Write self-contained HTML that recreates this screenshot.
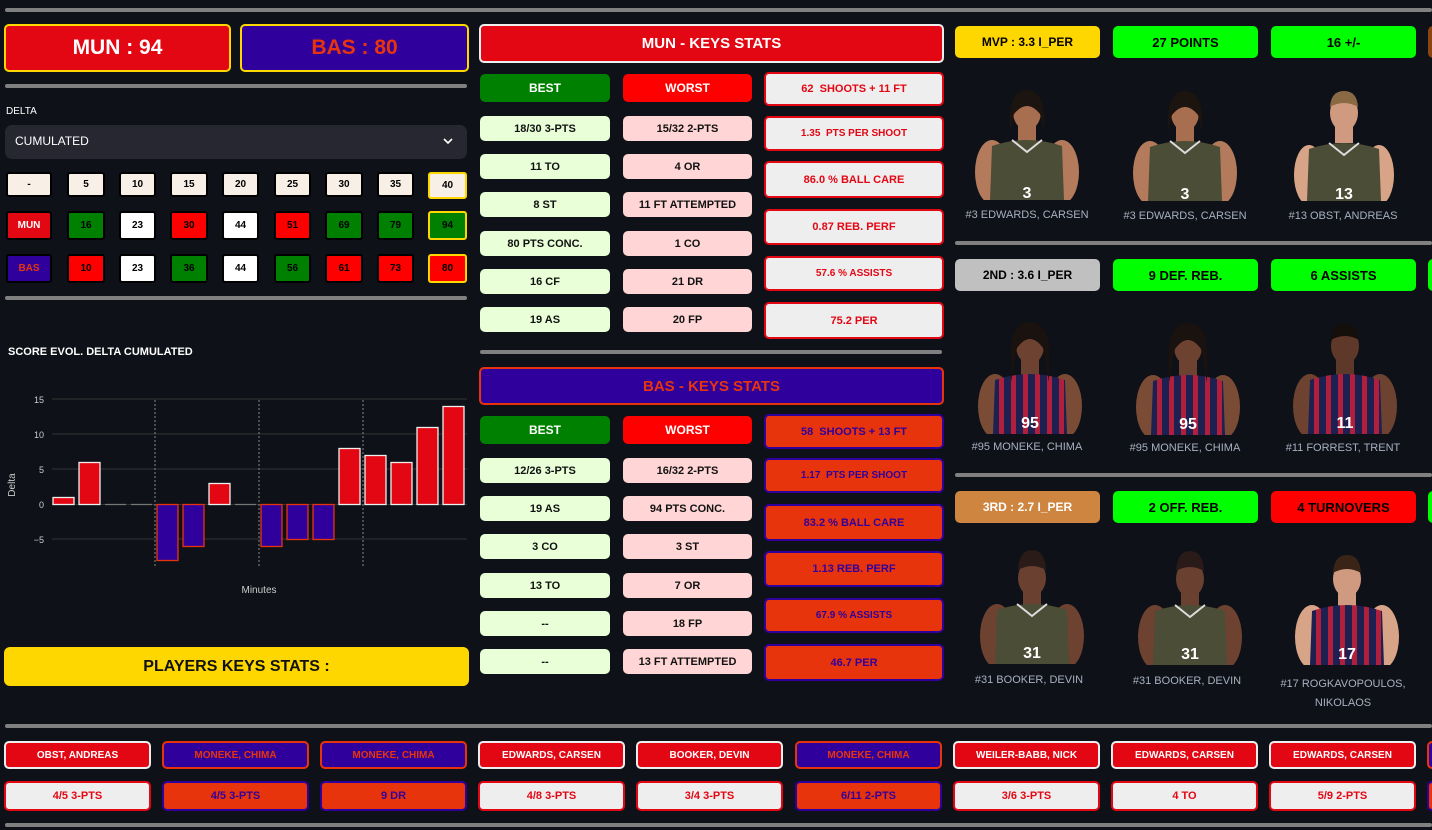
<!DOCTYPE html>
<html><head><meta charset="utf-8"><style>
*{box-sizing:border-box;margin:0;padding:0}
body{width:1432px;height:830px;background:#0e1117;overflow:hidden;position:relative;font-family:"Liberation Sans",sans-serif;font-weight:bold;color:#fff}
.b{position:absolute;display:flex;align-items:center;justify-content:center;text-align:center;border-radius:5px;white-space:nowrap}
.sep{position:absolute;height:4px;background:#808080;border-radius:2px}
.t{position:absolute;white-space:nowrap}
.g{background:#e8ffd8;color:#111;font-size:11px}
.r{background:#ffd5d5;color:#111;font-size:11px}
.mr{background:#eee;border:2px solid #e30613;color:#e30613;font-size:11px}
.br{background:#e8340c;border:2px solid #30009c;color:#30009c;font-size:11px}
.gb{border:2px solid #000;font-size:10px;color:#000;border-radius:3px}
.nm{position:absolute;color:#a8b0c0;font-weight:normal;font-size:11px;text-align:center;width:150px}
.rb{font-size:13px;color:#000;height:32px;width:145px}
.bn{font-size:10px;height:28px;width:147px}
.bs{font-size:11px;height:30px;width:147px}
.pm1{background:#e30613;border:2px solid #eee;color:#fff}
.pb1{background:#30009c;border:2px solid #e8340c;color:#e8340c}
.pm2{background:#eee;border:2px solid #e30613;color:#e30613}
.pb2{background:#e8340c;border:2px solid #30009c;color:#30009c}
svg text{font-weight:normal}
</style></head><body>
<svg width="0" height="0" style="position:absolute"><defs>
<pattern id="st" width="12" height="10" patternUnits="userSpaceOnUse"><rect width="12" height="10" fill="#1d2050"/><rect width="5" height="10" fill="#b0203c"/></pattern>
</defs></svg>

<div class="sep" style="left:5px;top:8px;width:1427px"></div>

<!-- LEFT -->
<div class="b" style="left:4px;top:24px;width:227px;height:48px;background:#e30613;border:2px solid #ffd700;font-size:21px">MUN : 94</div>
<div class="b" style="left:240px;top:24px;width:229px;height:48px;background:#30009c;border:2px solid #ffd700;font-size:21px;color:#e8340c">BAS : 80</div>
<div class="sep" style="left:5px;top:84px;width:462px"></div>
<div class="t" style="left:6px;top:106px;font-size:10px;font-weight:normal">DELTA</div>
<div style="position:absolute;left:5px;top:125px;width:462px;height:34px;background:#262730;border-radius:7px"></div>
<div class="t" style="left:15px;top:134px;font-size:12px;font-weight:normal">CUMULATED</div>
<svg style="position:absolute;left:443px;top:137px" width="10" height="8"><path d="M1 2 L5 6 L9 2" stroke="#fff" stroke-width="1.6" fill="none"/></svg>

<div class="b gb" style="left:6px;top:172px;width:46px;height:25px;background:#f8f0e6">-</div>
<div class="b gb" style="left:67px;top:172px;width:38px;height:25px;background:#f8f0e6">5</div>
<div class="b gb" style="left:119px;top:172px;width:37px;height:25px;background:#f8f0e6">10</div>
<div class="b gb" style="left:170px;top:172px;width:38px;height:25px;background:#f8f0e6">15</div>
<div class="b gb" style="left:222px;top:172px;width:37px;height:25px;background:#f8f0e6">20</div>
<div class="b gb" style="left:274px;top:172px;width:37px;height:25px;background:#f8f0e6">25</div>
<div class="b gb" style="left:325px;top:172px;width:38px;height:25px;background:#f8f0e6">30</div>
<div class="b gb" style="left:377px;top:172px;width:37px;height:25px;background:#f8f0e6">35</div>
<div class="b gb" style="left:428px;top:172px;width:39px;height:27px;background:#f8f0e6;border-color:#ffd700">40</div>

<div class="b gb" style="left:6px;top:211px;width:46px;height:29px;background:#e30613;color:#fff">MUN</div>
<div class="b gb" style="left:67px;top:211px;width:38px;height:29px;background:#008000">16</div>
<div class="b gb" style="left:119px;top:211px;width:37px;height:29px;background:#fff">23</div>
<div class="b gb" style="left:170px;top:211px;width:38px;height:29px;background:#ff0000">30</div>
<div class="b gb" style="left:222px;top:211px;width:37px;height:29px;background:#fff">44</div>
<div class="b gb" style="left:274px;top:211px;width:37px;height:29px;background:#ff0000">51</div>
<div class="b gb" style="left:325px;top:211px;width:38px;height:29px;background:#008000">69</div>
<div class="b gb" style="left:377px;top:211px;width:37px;height:29px;background:#008000">79</div>
<div class="b gb" style="left:428px;top:211px;width:39px;height:29px;background:#008000;border-color:#ffd700">94</div>

<div class="b gb" style="left:6px;top:254px;width:46px;height:29px;background:#30009c;color:#e8340c">BAS</div>
<div class="b gb" style="left:67px;top:254px;width:38px;height:29px;background:#ff0000">10</div>
<div class="b gb" style="left:119px;top:254px;width:37px;height:29px;background:#fff">23</div>
<div class="b gb" style="left:170px;top:254px;width:38px;height:29px;background:#008000">36</div>
<div class="b gb" style="left:222px;top:254px;width:37px;height:29px;background:#fff">44</div>
<div class="b gb" style="left:274px;top:254px;width:37px;height:29px;background:#008000">56</div>
<div class="b gb" style="left:325px;top:254px;width:38px;height:29px;background:#ff0000">61</div>
<div class="b gb" style="left:377px;top:254px;width:37px;height:29px;background:#ff0000">73</div>
<div class="b gb" style="left:428px;top:254px;width:39px;height:29px;background:#ff0000;border-color:#ffd700">80</div>
<div class="sep" style="left:5px;top:296px;width:462px"></div>

<div class="t" style="left:8px;top:346px;font-size:11px">SCORE EVOL. DELTA CUMULATED</div>
<svg style="position:absolute;left:0;top:380px" width="480" height="230" font-family="Liberation Sans" font-size="9" fill="#ccc">
<g stroke="#333" stroke-width="1">
<line x1="52" y1="19" x2="467" y2="19"/><line x1="52" y1="54" x2="467" y2="54"/><line x1="52" y1="89" x2="467" y2="89"/><line x1="52" y1="124.5" x2="467" y2="124.5"/><line x1="52" y1="159" x2="467" y2="159"/>
</g>
<g text-anchor="end"><text x="44" y="23">15</text><text x="44" y="58">10</text><text x="44" y="93">5</text><text x="44" y="128">0</text><text x="44" y="163">−5</text></g>
<text x="15" y="105" transform="rotate(-90 15 105)" text-anchor="middle" font-size="10">Delta</text>
<text x="259" y="213" text-anchor="middle" font-size="10">Minutes</text>
<g stroke="#888" stroke-dasharray="2,2" stroke-width="1"><line x1="155" y1="20" x2="155" y2="188"/><line x1="259" y1="20" x2="259" y2="188"/><line x1="363" y1="20" x2="363" y2="188"/></g>
<g fill="#e30613" stroke="#eee" stroke-width="1.3">
<rect x="53" y="117.5" width="21" height="7"/><rect x="79" y="82.5" width="21" height="42"/><rect x="209" y="103.5" width="21" height="21"/>
<rect x="339" y="68.5" width="21" height="56"/><rect x="365" y="75.5" width="21" height="49"/><rect x="391" y="82.5" width="21" height="42"/><rect x="417" y="47.5" width="21" height="77"/><rect x="443" y="26.5" width="21" height="98"/>
</g>
<g fill="#30009c" stroke="#e8340c" stroke-width="1.3">
<rect x="157" y="124.5" width="21" height="56"/><rect x="183" y="124.5" width="21" height="42"/><rect x="261" y="124.5" width="21" height="42"/><rect x="287" y="124.5" width="21" height="35"/><rect x="313" y="124.5" width="21" height="35"/>
</g>
<g stroke="#777" stroke-width="1.3"><line x1="105" y1="124.5" x2="126" y2="124.5"/><line x1="131" y1="124.5" x2="152" y2="124.5"/><line x1="235" y1="124.5" x2="256" y2="124.5"/></g>
</svg>
<div class="b" style="left:4px;top:647px;width:465px;height:39px;background:#ffd700;color:#111;font-size:16px;border-radius:6px">PLAYERS KEYS STATS :</div>

<!-- MIDDLE -->
<div class="b" style="left:479px;top:24px;width:465px;height:39px;background:#e30613;border:2px solid #eee;font-size:15px">MUN - KEYS STATS</div>
<div class="b" style="left:480px;top:74px;width:130px;height:28px;background:#008000;font-size:12px">BEST</div>
<div class="b" style="left:623px;top:74px;width:129px;height:28px;background:#ff0000;font-size:12px">WORST</div>
<div class="b g" style="left:480px;top:116px;width:130px;height:25px">18/30 3-PTS</div>
<div class="b g" style="left:480px;top:154px;width:130px;height:25px">11 TO</div>
<div class="b g" style="left:480px;top:192px;width:130px;height:25px">8 ST</div>
<div class="b g" style="left:480px;top:231px;width:130px;height:25px">80 PTS CONC.</div>
<div class="b g" style="left:480px;top:269px;width:130px;height:25px">16 CF</div>
<div class="b g" style="left:480px;top:307px;width:130px;height:25px">19 AS</div>
<div class="b r" style="left:623px;top:116px;width:129px;height:25px">15/32 2-PTS</div>
<div class="b r" style="left:623px;top:154px;width:129px;height:25px">4 OR</div>
<div class="b r" style="left:623px;top:192px;width:129px;height:25px">11 FT ATTEMPTED</div>
<div class="b r" style="left:623px;top:231px;width:129px;height:25px">1 CO</div>
<div class="b r" style="left:623px;top:269px;width:129px;height:25px">21 DR</div>
<div class="b r" style="left:623px;top:307px;width:129px;height:25px">20 FP</div>
<div class="b mr" style="left:764px;top:72px;width:180px;height:34px">62&nbsp; SHOOTS + 11 FT</div>
<div class="b mr" style="left:764px;top:116px;width:180px;height:35px;font-size:10px">1.35&nbsp; PTS PER SHOOT</div>
<div class="b mr" style="left:764px;top:161px;width:180px;height:37px">86.0 % BALL CARE</div>
<div class="b mr" style="left:764px;top:209px;width:180px;height:36px">0.87 REB. PERF</div>
<div class="b mr" style="left:764px;top:256px;width:180px;height:35px;font-size:10px">57.6 % ASSISTS</div>
<div class="b mr" style="left:764px;top:302px;width:180px;height:37px">75.2 PER</div>
<div class="sep" style="left:480px;top:350px;width:462px"></div>

<div class="b" style="left:479px;top:367px;width:465px;height:38px;background:#30009c;border:2px solid #e8340c;font-size:15px;color:#e8340c">BAS - KEYS STATS</div>
<div class="b" style="left:480px;top:416px;width:130px;height:28px;background:#008000;font-size:12px">BEST</div>
<div class="b" style="left:623px;top:416px;width:129px;height:28px;background:#ff0000;font-size:12px">WORST</div>
<div class="b g" style="left:480px;top:458px;width:130px;height:25px">12/26 3-PTS</div>
<div class="b g" style="left:480px;top:496px;width:130px;height:25px">19 AS</div>
<div class="b g" style="left:480px;top:534px;width:130px;height:25px">3 CO</div>
<div class="b g" style="left:480px;top:573px;width:130px;height:25px">13 TO</div>
<div class="b g" style="left:480px;top:611px;width:130px;height:25px">--</div>
<div class="b g" style="left:480px;top:649px;width:130px;height:25px">--</div>
<div class="b r" style="left:623px;top:458px;width:129px;height:25px">16/32 2-PTS</div>
<div class="b r" style="left:623px;top:496px;width:129px;height:25px">94 PTS CONC.</div>
<div class="b r" style="left:623px;top:534px;width:129px;height:25px">3 ST</div>
<div class="b r" style="left:623px;top:573px;width:129px;height:25px">7 OR</div>
<div class="b r" style="left:623px;top:611px;width:129px;height:25px">18 FP</div>
<div class="b r" style="left:623px;top:649px;width:129px;height:25px">13 FT ATTEMPTED</div>
<div class="b br" style="left:764px;top:414px;width:180px;height:35px">58&nbsp; SHOOTS + 13 FT</div>
<div class="b br" style="left:764px;top:458px;width:180px;height:35px;font-size:10px">1.17&nbsp; PTS PER SHOOT</div>
<div class="b br" style="left:764px;top:504px;width:180px;height:37px">83.2 % BALL CARE</div>
<div class="b br" style="left:764px;top:551px;width:180px;height:36px">1.13 REB. PERF</div>
<div class="b br" style="left:764px;top:598px;width:180px;height:35px;font-size:10px">67.9 % ASSISTS</div>
<div class="b br" style="left:764px;top:644px;width:180px;height:37px">46.7 PER</div>

<!-- RIGHT -->
<div class="b rb" style="left:955px;top:26px;background:#ffd700;font-size:12px">MVP : 3.3 I_PER</div>
<div class="b rb" style="left:1113px;top:26px;background:#00ff00">27 POINTS</div>
<div class="b rb" style="left:1271px;top:26px;background:#00ff00">16 +/-</div>
<div class="b rb" style="left:1428px;top:26px;background:#8b4513"></div>
<div class="sep" style="left:955px;top:241px;width:477px"></div>
<div class="b rb" style="left:955px;top:259px;background:#c0c0c0;font-size:12px">2ND : 3.6 I_PER</div>
<div class="b rb" style="left:1113px;top:259px;background:#00ff00">9 DEF. REB.</div>
<div class="b rb" style="left:1271px;top:259px;background:#00ff00">6 ASSISTS</div>
<div class="b rb" style="left:1428px;top:259px;background:#00ff00"></div>
<div class="sep" style="left:955px;top:473px;width:477px"></div>
<div class="b rb" style="left:955px;top:491px;background:#cd853f;color:#fff;font-size:12px">3RD : 2.7 I_PER</div>
<div class="b rb" style="left:1113px;top:491px;background:#00ff00">2 OFF. REB.</div>
<div class="b rb" style="left:1271px;top:491px;background:#ff0000">4 TURNOVERS</div>
<div class="b rb" style="left:1428px;top:491px;background:#00ff00"></div>

<!-- players -->
<svg style="position:absolute;left:972px;top:84px" width="110" height="116"><ellipse cx="20" cy="88" rx="17" ry="32" fill="#b47a5c"/><ellipse cx="90" cy="88" rx="17" ry="32" fill="#b47a5c"/><rect x="46" y="38" width="18" height="20" fill="#a86e50"/><path d="M20 62 Q55 50 90 62 L92 116 L18 116Z" fill="#4b4d36"/><path d="M40 56 L55 68 L70 56" stroke="#ddd" stroke-width="2" fill="none"/><ellipse cx="55" cy="28" rx="14" ry="18" fill="#a86e50"/><path d="M38 30 Q40 6 55 6 Q70 6 72 30 L72 48 L68 30 Q55 14 42 30 L38 48Z" fill="#1c140f"/><text x="55" y="114" fill="#fff" font-size="16" text-anchor="middle" font-family="Liberation Sans" style="font-weight:bold">3</text></svg>
<svg style="position:absolute;left:1130px;top:85px" width="110" height="116"><ellipse cx="20" cy="88" rx="17" ry="32" fill="#b47a5c"/><ellipse cx="90" cy="88" rx="17" ry="32" fill="#b47a5c"/><rect x="46" y="38" width="18" height="20" fill="#a86e50"/><path d="M20 62 Q55 50 90 62 L92 116 L18 116Z" fill="#4b4d36"/><path d="M40 56 L55 68 L70 56" stroke="#ddd" stroke-width="2" fill="none"/><ellipse cx="55" cy="28" rx="14" ry="18" fill="#a86e50"/><path d="M38 30 Q40 6 55 6 Q70 6 72 30 L72 48 L68 30 Q55 14 42 30 L38 48Z" fill="#1c140f"/><text x="55" y="114" fill="#fff" font-size="16" text-anchor="middle" font-family="Liberation Sans" style="font-weight:bold">3</text></svg>
<svg style="position:absolute;left:1289px;top:85px" width="110" height="116"><ellipse cx="20" cy="90" rx="15" ry="30" fill="#d8a488"/><ellipse cx="90" cy="90" rx="15" ry="30" fill="#d8a488"/><rect x="46" y="38" width="18" height="20" fill="#d09a80"/><path d="M20 64 Q55 52 90 64 L92 116 L18 116Z" fill="#4b4d36"/><path d="M40 58 L55 70 L70 58" stroke="#ddd" stroke-width="2" fill="none"/><ellipse cx="55" cy="28" rx="14" ry="18" fill="#d09a80"/><path d="M41 22 Q42 6 55 6 Q68 6 69 22 Q55 14 41 22Z" fill="#8a6a44"/><text x="55" y="114" fill="#fff" font-size="16" text-anchor="middle" font-family="Liberation Sans" style="font-weight:bold">13</text></svg>

<svg style="position:absolute;left:975px;top:318px" width="110" height="116"><ellipse cx="20" cy="88" rx="17" ry="32" fill="#7a4c36"/><ellipse cx="90" cy="88" rx="17" ry="32" fill="#7a4c36"/><rect x="46" y="38" width="18" height="20" fill="#6e4230"/><path d="M20 62 Q55 50 90 62 L92 116 L18 116Z" fill="url(#st)"/><ellipse cx="55" cy="28" rx="14" ry="18" fill="#6e4230"/><path d="M36 30 Q38 4 55 4 Q72 4 74 30 L74 64 L68 30 Q55 12 42 30 L36 64Z" fill="#1a120e"/><text x="55" y="110" fill="#fff" font-size="16" text-anchor="middle" font-family="Liberation Sans" style="font-weight:bold">95</text></svg>
<svg style="position:absolute;left:1133px;top:319px" width="110" height="116"><ellipse cx="20" cy="88" rx="17" ry="32" fill="#7a4c36"/><ellipse cx="90" cy="88" rx="17" ry="32" fill="#7a4c36"/><rect x="46" y="38" width="18" height="20" fill="#6e4230"/><path d="M20 62 Q55 50 90 62 L92 116 L18 116Z" fill="url(#st)"/><ellipse cx="55" cy="28" rx="14" ry="18" fill="#6e4230"/><path d="M36 30 Q38 4 55 4 Q72 4 74 30 L74 64 L68 30 Q55 12 42 30 L36 64Z" fill="#1a120e"/><text x="55" y="110" fill="#fff" font-size="16" text-anchor="middle" font-family="Liberation Sans" style="font-weight:bold">95</text></svg>
<svg style="position:absolute;left:1290px;top:318px" width="110" height="116"><ellipse cx="20" cy="88" rx="17" ry="32" fill="#6e4230"/><ellipse cx="90" cy="88" rx="17" ry="32" fill="#6e4230"/><rect x="46" y="38" width="18" height="20" fill="#5e3828"/><path d="M20 62 Q55 50 90 62 L92 116 L18 116Z" fill="url(#st)"/><ellipse cx="55" cy="28" rx="14" ry="18" fill="#5e3828"/><path d="M41 22 Q42 6 55 6 Q68 6 69 22 Q55 14 41 22Z" fill="#150f0b"/><text x="55" y="110" fill="#fff" font-size="16" text-anchor="middle" font-family="Liberation Sans" style="font-weight:bold">11</text></svg>

<svg style="position:absolute;left:977px;top:548px" width="110" height="116"><ellipse cx="20" cy="88" rx="17" ry="32" fill="#6e4230"/><ellipse cx="90" cy="88" rx="17" ry="32" fill="#6e4230"/><rect x="46" y="38" width="18" height="20" fill="#6a4030"/><path d="M20 62 Q55 50 90 62 L92 116 L18 116Z" fill="#4b4d36"/><path d="M40 56 L55 68 L70 56" stroke="#ddd" stroke-width="2" fill="none"/><ellipse cx="55" cy="30" rx="14" ry="18" fill="#6a4030"/><path d="M41 22 Q42 2 55 2 Q68 2 69 22 Q55 14 41 22Z" fill="#2a1a18"/><text x="55" y="110" fill="#fff" font-size="16" text-anchor="middle" font-family="Liberation Sans" style="font-weight:bold">31</text></svg>
<svg style="position:absolute;left:1135px;top:549px" width="110" height="116"><ellipse cx="20" cy="88" rx="17" ry="32" fill="#6e4230"/><ellipse cx="90" cy="88" rx="17" ry="32" fill="#6e4230"/><rect x="46" y="38" width="18" height="20" fill="#6a4030"/><path d="M20 62 Q55 50 90 62 L92 116 L18 116Z" fill="#4b4d36"/><path d="M40 56 L55 68 L70 56" stroke="#ddd" stroke-width="2" fill="none"/><ellipse cx="55" cy="30" rx="14" ry="18" fill="#6a4030"/><path d="M41 22 Q42 2 55 2 Q68 2 69 22 Q55 14 41 22Z" fill="#2a1a18"/><text x="55" y="110" fill="#fff" font-size="16" text-anchor="middle" font-family="Liberation Sans" style="font-weight:bold">31</text></svg>
<svg style="position:absolute;left:1292px;top:549px" width="110" height="116"><ellipse cx="20" cy="88" rx="17" ry="32" fill="#d8a488"/><ellipse cx="90" cy="88" rx="17" ry="32" fill="#d8a488"/><rect x="46" y="38" width="18" height="20" fill="#d09a80"/><path d="M20 62 Q55 50 90 62 L92 116 L18 116Z" fill="url(#st)"/><ellipse cx="55" cy="30" rx="14" ry="18" fill="#d09a80"/><path d="M41 24 Q42 6 55 6 Q68 6 69 24 Q55 16 41 24Z" fill="#3a2418"/><text x="55" y="110" fill="#fff" font-size="16" text-anchor="middle" font-family="Liberation Sans" style="font-weight:bold">17</text></svg>

<div class="nm" style="left:952px;top:209px">#3 EDWARDS, CARSEN</div>
<div class="nm" style="left:1110px;top:210px">#3 EDWARDS, CARSEN</div>
<div class="nm" style="left:1268px;top:210px">#13 OBST, ANDREAS</div>
<div class="nm" style="left:952px;top:441px">#95 MONEKE, CHIMA</div>
<div class="nm" style="left:1110px;top:442px">#95 MONEKE, CHIMA</div>
<div class="nm" style="left:1268px;top:442px">#11 FORREST, TRENT</div>
<div class="nm" style="left:954px;top:674px">#31 BOOKER, DEVIN</div>
<div class="nm" style="left:1112px;top:675px">#31 BOOKER, DEVIN</div>
<div class="nm" style="left:1268px;top:675px;line-height:19px">#17 ROGKAVOPOULOS,<br>NIKOLAOS</div>

<!-- BOTTOM -->
<div class="sep" style="left:5px;top:724px;width:1427px"></div>
<div class="b bn pm1" style="left:4px;top:741px">OBST, ANDREAS</div>
<div class="b bn pb1" style="left:162px;top:741px">MONEKE, CHIMA</div>
<div class="b bn pb1" style="left:320px;top:741px">MONEKE, CHIMA</div>
<div class="b bn pm1" style="left:478px;top:741px">EDWARDS, CARSEN</div>
<div class="b bn pm1" style="left:636px;top:741px">BOOKER, DEVIN</div>
<div class="b bn pb1" style="left:795px;top:741px">MONEKE, CHIMA</div>
<div class="b bn pm1" style="left:953px;top:741px">WEILER-BABB, NICK</div>
<div class="b bn pm1" style="left:1111px;top:741px">EDWARDS, CARSEN</div>
<div class="b bn pm1" style="left:1269px;top:741px">EDWARDS, CARSEN</div>
<div class="b bn pb1" style="left:1427px;top:741px"></div>
<div class="b bs pm2" style="left:4px;top:781px">4/5 3-PTS</div>
<div class="b bs pb2" style="left:162px;top:781px">4/5 3-PTS</div>
<div class="b bs pb2" style="left:320px;top:781px">9 DR</div>
<div class="b bs pm2" style="left:478px;top:781px">4/8 3-PTS</div>
<div class="b bs pm2" style="left:636px;top:781px">3/4 3-PTS</div>
<div class="b bs pb2" style="left:795px;top:781px">6/11 2-PTS</div>
<div class="b bs pm2" style="left:953px;top:781px">3/6 3-PTS</div>
<div class="b bs pm2" style="left:1111px;top:781px">4 TO</div>
<div class="b bs pm2" style="left:1269px;top:781px">5/9 2-PTS</div>
<div class="b bs pb2" style="left:1427px;top:781px"></div>
<div class="sep" style="left:5px;top:823px;width:1427px"></div>
</body></html>
